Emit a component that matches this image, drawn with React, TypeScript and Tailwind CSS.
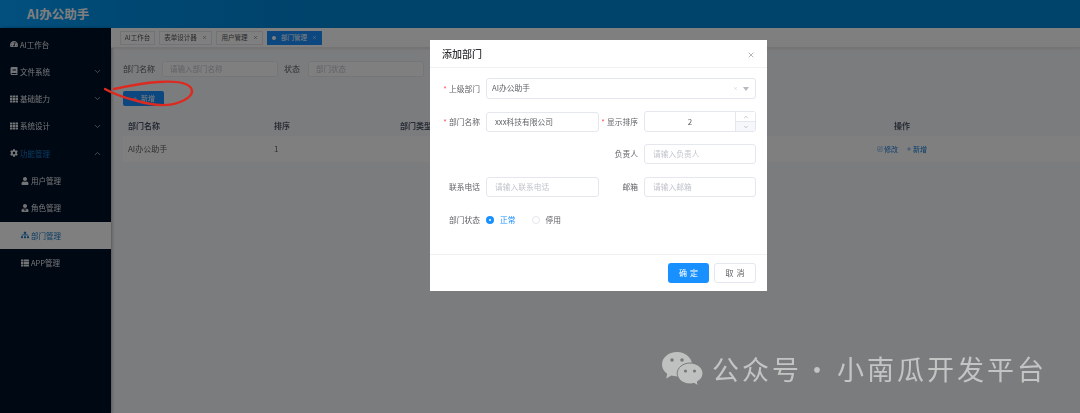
import React from "react";
import { ChevronDown, ChevronUp, Plus, SquarePen, X } from "lucide-react";
import { FaTachometerAlt, FaBook, FaTh, FaCog, FaUser, FaUserTie, FaSitemap, FaThList } from "react-icons/fa";

const font = { fontFamily: '"Noto Sans CJK SC","Liberation Sans",sans-serif' };

function MenuItem({ icon, label, arrow, sub, active, open }: { icon: React.ReactNode; label: string; arrow?: "down" | "up"; sub?: boolean; active?: boolean; open?: boolean }) {
  return (
    <div className={`flex h-[27.3px] items-center ${sub ? "pl-[21px]" : "pl-[10px]"} pr-[9px] text-[7.5px] ${active ? "bg-[#ffffff] text-[#1679c9]" : open ? "text-[#1679c9]" : "text-[#e6e8ea]"}`}>
      <span className={`mr-[2px] flex w-[8px] justify-center ${open ? "text-[#e6e8ea]" : ""}`}>{icon}</span>
      <span className="flex-1 whitespace-nowrap">{label}</span>
      {arrow === "down" && <ChevronDown className="h-[9px] w-[9px] text-[#c0c4ca]" />}
      {arrow === "up" && <ChevronUp className="h-[9px] w-[9px] text-[#c0c4ca]" />}
    </div>
  );
}

function Tab({ label, active, closable, w }: { label: string; active?: boolean; closable?: boolean; w: string }) {
  return (
    <div className={`flex h-[14px] items-center justify-center gap-[5px] border text-[6.5px] ${w} ${active ? "border-[#1890ff] bg-[#1890ff] text-white" : "border-[#e4e6ea] bg-white text-[#555]"}`}>
      {active && <span className="h-[4px] w-[4px] rounded-full bg-white" />}
      <span className="whitespace-nowrap">{label}</span>
      {closable && <X className="h-[5px] w-[5px]" />}
    </div>
  );
}

function Label({ text, req, w }: { text: string; req?: boolean; w: string }) {
  return (
    <div className={`shrink-0 whitespace-nowrap pr-[6px] text-right text-[7.75px] text-[#606266] ${w}`}>
      {req && <span className="mr-[2px] text-[#ff4d4f]">*</span>}
      {text}
    </div>
  );
}

function Field({ placeholder, value, w }: { placeholder?: string; value?: string; w: string }) {
  return (
    <div className={`flex h-[20px] items-center rounded-[3px] border border-[#e4e7ed] bg-white pl-[8px] text-[7.75px] ${w} ${value ? "text-[#606266]" : "text-[#c0c4cc]"}`}>
      {value || placeholder}
    </div>
  );
}

export default function App() {
  return (
    <div className="relative h-[413px] w-[1080px] overflow-hidden bg-[#f7f8fa]" style={font}>
      <div className="flex h-full flex-col blur-[0.3px]">
        <header className="flex h-[28px] shrink-0 items-center bg-[linear-gradient(90deg,#06a0fe_0%,#0090e6_12%,#0086d6_30%,#0086d6_100%)] pl-[27px] text-[12.5px] font-bold text-white">
          AI办公助手
        </header>
        <div className="flex min-h-0 flex-1">
          <aside className="flex w-[111px] shrink-0 flex-col bg-[#001128] pt-[2.5px] shadow-[1px_0_3px_rgba(0,0,0,0.3)]">
            <MenuItem icon={<FaTachometerAlt className="h-[8px] w-[8px]" />} label="AI工作台" />
            <MenuItem icon={<FaBook className="h-[8px] w-[8px]" />} label="文件系统" arrow="down" />
            <MenuItem icon={<FaTh className="h-[8px] w-[8px]" />} label="基础能力" arrow="down" />
            <MenuItem icon={<FaTh className="h-[8px] w-[8px]" />} label="系统设计" arrow="down" />
            <MenuItem icon={<FaCog className="h-[8px] w-[8px]" />} label="功能管理" arrow="up" open />
            <MenuItem icon={<FaUser className="h-[8px] w-[8px]" />} label="用户管理" sub />
            <MenuItem icon={<FaUserTie className="h-[8px] w-[8px]" />} label="角色管理" sub />
            <MenuItem icon={<FaSitemap className="h-[8px] w-[8px]" />} label="部门管理" sub active />
            <MenuItem icon={<FaThList className="h-[8px] w-[8px]" />} label="APP管理" sub />
          </aside>
          <main className="min-w-0 flex-1">
            <div className="flex h-[20px] items-center gap-[4px] border-b border-[#e8e9ec] bg-white pl-[9px] shadow-[0_1px_2px_rgba(0,0,0,0.08)]">
              <Tab label="AI工作台" w="w-[35px]" />
              <Tab label="表单设计器" closable w="w-[53px]" />
              <Tab label="用户管理" closable w="w-[47px]" />
              <Tab label="部门管理" closable active w="w-[55px]" />
            </div>
            <div className="pl-[12px] pt-[13px]">
              <div className="flex h-[16px] items-center text-[8px] text-[#606266]">
                <span className="w-[39px]">部门名称</span>
                <div className="flex h-[16px] w-[116px] items-center rounded-[2px] border border-[#ebedf0] bg-white pl-[7px] text-[7.5px] text-[#c0c4cc]">请输入部门名称</div>
                <span className="ml-[6px] w-[24px]">状态</span>
                <div className="flex h-[16px] w-[116px] items-center rounded-[2px] border border-[#ebedf0] bg-white pl-[7px] text-[7.5px] text-[#c0c4cc]">部门状态</div>
              </div>
              <button className="mt-[14px] flex h-[15px] w-[41px] items-center justify-center gap-[3px] rounded-[2px] bg-[#1890ff] text-[7px] text-white">
                <Plus className="h-[6px] w-[6px]" /> 新增
              </button>
              <div className="mt-[9px] grid h-[21px] grid-cols-[146px_126px_494px_1fr] items-center pl-[5px] text-[8px] font-bold text-[#515a6e]">
                <span>部门名称</span>
                <span>排序</span>
                <span>部门类型</span>
                <span>操作</span>
              </div>
              <div className="grid h-[26px] grid-cols-[146px_603px_1fr] items-center bg-white pl-[5px] text-[8px] text-[#606266]">
                <span>AI办公助手</span>
                <span>1</span>
                <span className="flex items-center gap-[8px] text-[7px] text-[#1679d8]">
                  <span className="flex items-center gap-[1px]"><SquarePen className="h-[6px] w-[6px]" strokeWidth={1.5} />修改</span>
                  <span className="flex items-center gap-[1px]"><Plus className="h-[6px] w-[6px]" />新增</span>
                </span>
              </div>
            </div>
          </main>
        </div>
      </div>

      {/* dim layer */}
      <div className="absolute inset-0 bg-black/50" />

      {/* red annotation */}
      <svg className="absolute left-[100px] top-[76px]" width="100" height="36" viewBox="0 0 100 36" fill="none">
        <path d="M5 13 C 12 17, 22 21, 34 24 C 50 29, 68 31, 80 26 C 90 22, 94 17, 91 12 C 87 6, 72 5, 58 6 C 42 7, 28 10, 14 13" stroke="#dd2a20" strokeWidth="2.4" strokeLinecap="round" />
      </svg>

      {/* dialog */}
      <div className="absolute left-[430px] top-[40px] flex h-[251px] w-[337px] flex-col bg-white blur-[0.3px]">
        <div className="flex h-[28px] shrink-0 items-center justify-between border-b border-[#f0f1f3] px-[12px]">
          <span className="text-[10px] font-medium text-[#303133]">添加部门</span>
          <X className="mt-[2px] h-[8px] w-[8px] text-[#909399]" />
        </div>
        <div className="flex-1 pt-[10px]">
          <div className="flex h-[21px] items-center">
            <Label text="上级部门" req w="w-[56px]" />
            <div className="flex h-[21px] w-[270px] items-center justify-between rounded-[3px] border border-[#e4e7ed] pl-[5px] pr-[6px] text-[7.75px] text-[#606266]">
              <span className="-mt-[2px]">AI办公助手</span>
              <span className="flex items-center gap-[5px] text-[#c0c4cc]">
                <X className="h-[5px] w-[5px]" />
                <span className="h-0 w-0 border-x-[3px] border-t-[4px] border-x-transparent border-t-[#b5b9c0]" />
              </span>
            </div>
          </div>
          <div className="mt-[12px] flex h-[21px] items-center">
            <Label text="部门名称" req w="w-[56px]" />
            <Field value="xxx科技有限公司" w="w-[113px]" />
            <Label text="显示排序" req w="w-[45px]" />
            <div className="flex h-[21px] w-[112px] items-stretch rounded-[3px] border border-[#e4e7ed] text-[8px] text-[#606266]">
              <span className="flex flex-1 items-center justify-center">2</span>
              <span className="flex w-[20px] flex-col border-l border-[#e4e7ed] bg-[#f5f7fa] text-[#909399]">
                <span className="flex flex-1 items-center justify-center border-b border-[#e4e7ed] bg-white"><ChevronUp className="h-[6px] w-[6px]" /></span>
                <span className="flex flex-1 items-center justify-center"><ChevronDown className="h-[6px] w-[6px]" /></span>
              </span>
            </div>
          </div>
          <div className="mt-[12px] flex h-[20px] items-center pl-[169px]">
            <Label text="负责人" w="w-[45px]" />
            <Field placeholder="请输入负责人" w="w-[112px]" />
          </div>
          <div className="mt-[13px] flex h-[20px] items-center">
            <Label text="联系电话" w="w-[56px]" />
            <Field placeholder="请输入联系电话" w="w-[113px]" />
            <Label text="邮箱" w="w-[45px]" />
            <Field placeholder="请输入邮箱" w="w-[112px]" />
          </div>
          <div className="mt-[13px] flex h-[20px] items-center text-[7.75px]">
            <Label text="部门状态" w="w-[56px]" />
            <span className="flex h-[8px] w-[8px] items-center justify-center rounded-full bg-[#1890ff]"><span className="h-[2.5px] w-[2.5px] rounded-full bg-white" /></span>
            <span className="ml-[6px] text-[#1890ff]">正常</span>
            <span className="ml-[16px] h-[8px] w-[8px] rounded-full border border-[#e4e7ed]" />
            <span className="ml-[6px] text-[#606266]">停用</span>
          </div>
        </div>
        <div className="flex h-[37px] shrink-0 items-center justify-end gap-[5px] border-t border-[#eff0f2] pr-[11px]">
          <button className="h-[20px] w-[41px] rounded-[3px] bg-[#1890ff] pl-[3px] text-[8px] tracking-[3px] text-white">确定</button>
          <button className="h-[20px] w-[42px] rounded-[3px] border border-[#e4e7ed] pl-[3px] text-[8px] tracking-[3px] text-[#606266]">取消</button>
        </div>
      </div>

      {/* watermark */}
      <div className="absolute left-[662px] top-[352px] flex items-center text-[#c3c5c5]">
        <svg width="41" height="34" viewBox="0 0 41 34">
          <path d="M15 0C6.700 0 0 5.500 0 12.500c0 3.800 2 7 5.200 9.300L4.200 26.500l5.200-2.900c1.700.5 3.600.8 5.600.8 8.300 0 15-5.400 15-11.900S23.300 0 15 0z" fill="#bfc1c1" />
          <path d="M28 11c-7 0-12.800 4.700-12.800 10.500S21 32 28 32c1.400 0 2.800-.2 4-.6l4.300 2.400-.9-4.100C38.800 27.800 41 24.900 41 21.500 41 15.700 35 11 28 11z" fill="#bfc1c1" stroke="#77787a" strokeWidth="1" />
          <circle cx="10" cy="8" r="1.800" fill="#77787a" />
          <circle cx="20" cy="8" r="1.800" fill="#77787a" />
          <circle cx="23.500" cy="19" r="1.600" fill="#77787a" />
          <circle cx="32.500" cy="19" r="1.600" fill="#77787a" />
        </svg>
        <span className="ml-[9px] whitespace-nowrap text-[27px] leading-[34px] tracking-[3px]">
          公众号<span className="inline-block w-[35px] pr-[2px] text-center">·</span>小南瓜开发平台
        </span>
      </div>
    </div>
  );
}
